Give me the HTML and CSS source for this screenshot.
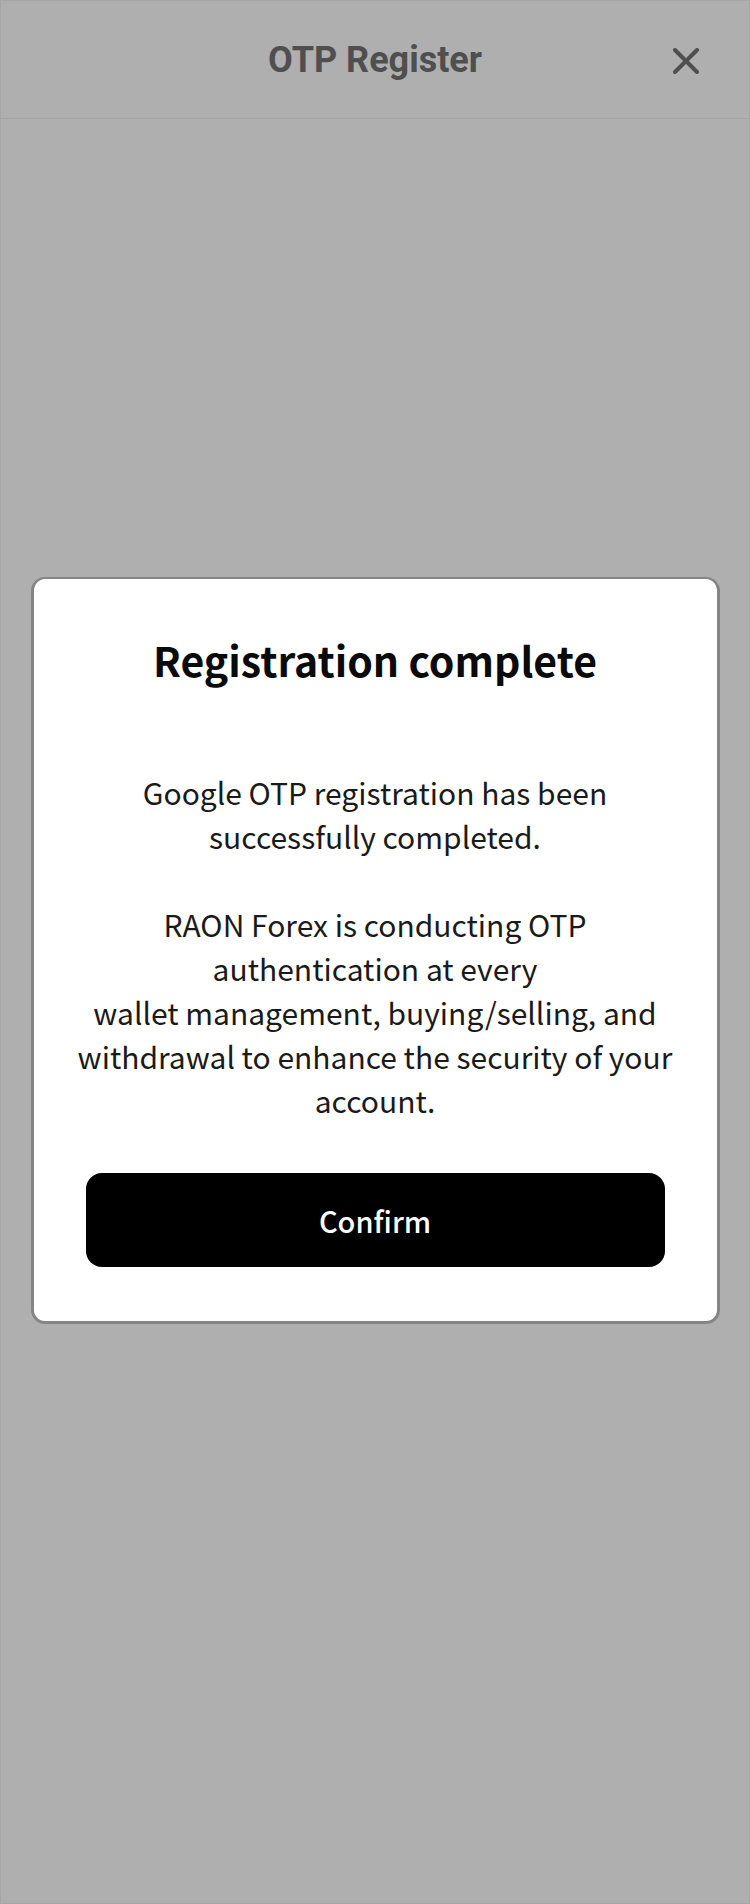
FILE: index.html
```html
<!DOCTYPE html>
<html lang="en">
<head>
<meta charset="utf-8">
<title>OTP Register</title>
<link rel="stylesheet" href="styles.css">
</head>
<body>
<div class="page">
  <header class="topbar">
    <h1 class="topbar-title">OTP Register</h1>
    <button class="close-btn" aria-label="Close">
      <svg viewBox="0 0 26 26" width="26" height="26"><path d="M2 2 L24 24 M24 2 L2 24" stroke="currentColor" stroke-width="4" stroke-linecap="round" fill="none"/></svg>
    </button>
  </header>
</div>
<div class="overlay">
  <div class="modal">
    <h2 class="modal-title">Registration complete</h2>
    <p class="modal-text">Google OTP registration has been<br>successfully completed.<br><br>RAON Forex is conducting OTP<br>authentication at every<br>wallet management, buying/selling, and<br>withdrawal to enhance the security of your<br>account.</p>
    <button class="confirm-btn">Confirm</button>
  </div>
</div>
</body>
</html>
```
FILE: styles.css
```css
html, body {
  margin: 0;
  padding: 0;
}
body {
  width: 750px;
  height: 1904px;
  background: #fff;
  font-family: "Noto Sans CJK KR", "Noto Sans", sans-serif;
}
.page {
  box-sizing: border-box;
  height: 1904px;
  border: 1px solid #f0f0f0;
  background: #fff;
}
.topbar {
  position: relative;
  height: 117px;
  border-bottom: 1px solid #f0f0f0;
  display: flex;
  align-items: center;
  justify-content: center;
}
.topbar-title {
  margin: 0;
  font-family: Roboto, "Noto Sans", sans-serif;
  font-weight: 700;
  font-size: 36px;
  color: #737373;
  line-height: 1;
}
.close-btn {
  position: absolute;
  right: 50px;
  top: 47px;
  width: 26px;
  height: 26px;
  padding: 0;
  border: 0;
  background: none;
  color: #737373;
  display: flex;
}
.overlay {
  position: fixed;
  inset: 0;
  background: rgba(0, 0, 0, 0.314);
  display: flex;
  align-items: center;
  justify-content: center;
}
.modal {
  box-sizing: border-box;
  width: 689px;
  margin-top: -3px;
  background: #fff;
  border: 3px solid #858585;
  border-top-width: 2px;
  border-radius: 14px;
  padding: 48px 52px 54px;
  display: flex;
  flex-direction: column;
  align-items: stretch;
  text-align: center;
}
.modal-title {
  margin: 0;
  font-size: 41px;
  font-weight: 700;
  line-height: 64px;
  color: #0a0a0a;
}
.modal-text {
  margin: 79px -30px 0;
  font-size: 30px;
  line-height: 44px;
  color: #1a1a1a;
}
.confirm-btn {
  margin-top: 51px;
  height: 94px;
  border: 0;
  border-radius: 16px;
  background: #000;
  color: #fff;
  font-family: "Noto Sans CJK KR", "Noto Sans", sans-serif;
  font-size: 29px;
  font-weight: 500;
}
```
